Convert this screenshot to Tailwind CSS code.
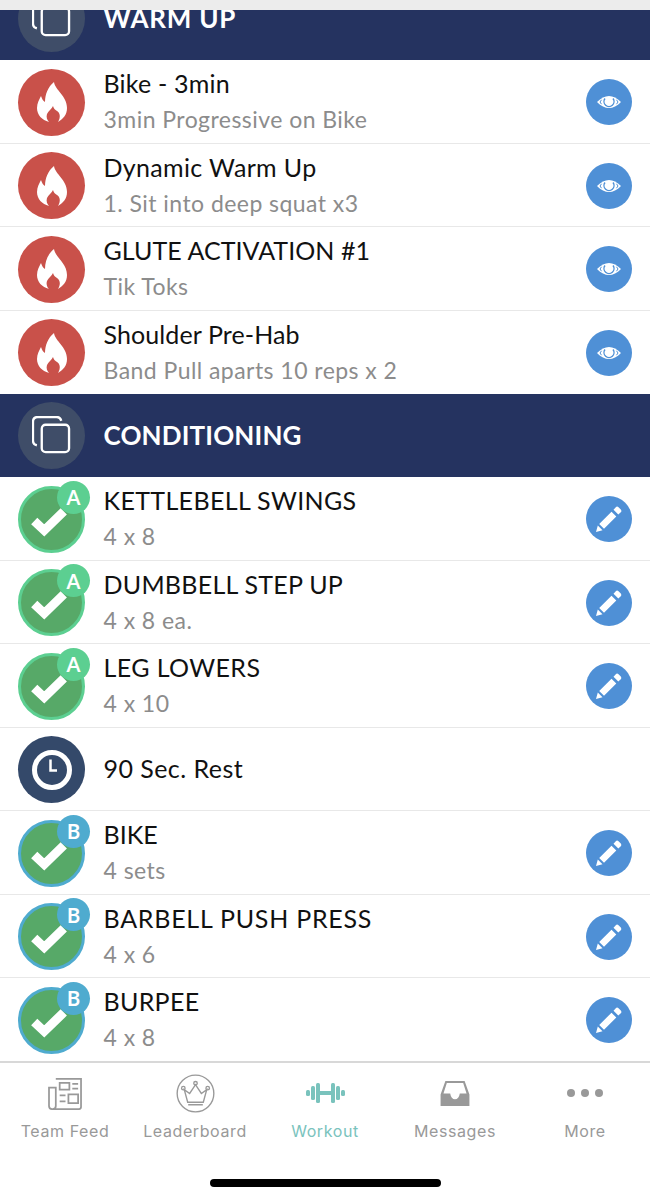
<!DOCTYPE html>
<html lang="en">
<head>
  <meta charset="UTF-8" />
  <title>Workout</title>
  <script src="https://cdn.jsdelivr.net/npm/@tailwindcss/browser@4"></script>
</head>
<body class="bg-white font-['Lato',sans-serif]">
  <!-- shared icons -->
  <svg class="hidden">
    <symbol id="flame" viewBox="0 0 30 40"><path fill="#fff" d="M17 0C18 8 30 14 30 26C30 33 26 37 21 40C24 35 23 31 20 29C18 28 16.500 26 16 24C15 27 11 29 10 32C9 35 10 38 12 40C5 38 0 33 0 26C0 21 2.500 17 4 14C5 17 6 19 8 20C8 12 11 5 17 0Z"/></symbol>
    <symbol id="eye" viewBox="0 0 24 12"><path fill="#fff" d="M0 6C4 2 8 0 12 0S20 2 24 6C20 10 16 12 12 12S4 10 0 6Z"/><path fill="none" stroke="#4f90d6" stroke-width="1.400" d="M8 2.500A5 5 0 1 0 16 2.500"/><path fill="none" stroke="#4f90d6" stroke-width="1" d="M4.500 3.800L3 6L4.500 8.200M19.500 3.800L21 6L19.500 8.200"/></symbol>
    <symbol id="pencil" viewBox="0 0 26 26"><path fill="#fff" d="M0 26L1.800 19.500L6.500 24.200ZM3.200 18L15.500 5.700L20.300 10.500L8 22.800ZM17.500 3.700L19.800 1.200Q21 0 22.500 1.200L24.800 3.500Q26 5 24.800 6.200L22.300 8.500Z"/></symbol>
    <symbol id="check" viewBox="0 0 36 28"><path fill="none" stroke="#fff" stroke-width="8.500" d="M4 12L13.500 21L32 3"/></symbol>
    <symbol id="layers" viewBox="0 0 40 40"><path fill="none" stroke="#fff" stroke-width="2.400" d="M5 30Q1 29 1 25V6Q1 1 6 1H25Q29 1 30 5"/><rect x="10" y="9" width="28" height="28" rx="4" fill="none" stroke="#fff" stroke-width="2.400"/></symbol>
  </svg>

  <div class="w-[650px] h-[1200px] flex flex-col overflow-hidden">
    <div class="h-[10px] bg-[#ececec]"></div>

    <!-- section cut off by the top of the scroll view -->
    <div class="h-[50px] flex flex-col justify-end overflow-hidden bg-[#253360]">
      <div class="h-[83px] shrink-0 flex items-center pl-[18px] gap-[18.5px]">
        <div class="w-[67px] h-[67px] rounded-full bg-[#3f4d68] flex items-center justify-center"><svg class="w-[39px] h-[39px]"><use href="#layers"/></svg></div>
        <div class="text-[26px] font-bold text-white tracking-[0.8px]">WARM UP</div>
      </div>
    </div>

    <div class="h-[83.5px] flex items-center pl-[18px] pr-[18px] gap-[18.5px] border-b border-[#e8e8e8]">
      <div class="mt-[2px] w-[67px] h-[67px] rounded-full bg-[#c9514a] flex items-center justify-center"><svg class="w-[30px] h-[40px]"><use href="#flame"/></svg></div>
      <div class="flex-1">
        <div class="text-[25px] leading-[36px] tracking-[0.2px] text-[#111]">Bike - 3min</div>
        <div class="text-[23px] leading-[36px] tracking-[0.45px] text-[#8c8c8c]">3min Progressive on Bike</div>
      </div>
      <div class="mt-[2px] w-[46px] h-[46px] rounded-full bg-[#4f90d6] flex items-center justify-center"><svg class="w-[24px] h-[12px]"><use href="#eye"/></svg></div>
    </div>
    <div class="h-[83.5px] flex items-center pl-[18px] pr-[18px] gap-[18.5px] border-b border-[#e8e8e8]">
      <div class="mt-[2px] w-[67px] h-[67px] rounded-full bg-[#c9514a] flex items-center justify-center"><svg class="w-[30px] h-[40px]"><use href="#flame"/></svg></div>
      <div class="flex-1">
        <div class="text-[25px] leading-[36px] tracking-[0.35px] text-[#111]">Dynamic Warm Up</div>
        <div class="text-[23px] leading-[36px] tracking-[0.45px] text-[#8c8c8c]">1. Sit into deep squat x3</div>
      </div>
      <div class="mt-[2px] w-[46px] h-[46px] rounded-full bg-[#4f90d6] flex items-center justify-center"><svg class="w-[24px] h-[12px]"><use href="#eye"/></svg></div>
    </div>
    <div class="h-[83.5px] flex items-center pl-[18px] pr-[18px] gap-[18.5px] border-b border-[#e8e8e8]">
      <div class="mt-[2px] w-[67px] h-[67px] rounded-full bg-[#c9514a] flex items-center justify-center"><svg class="w-[30px] h-[40px]"><use href="#flame"/></svg></div>
      <div class="flex-1">
        <div class="text-[25px] leading-[36px] tracking-[0.05px] text-[#111]">GLUTE ACTIVATION #1</div>
        <div class="text-[23px] leading-[36px] tracking-[0.45px] text-[#8c8c8c]">Tik Toks</div>
      </div>
      <div class="mt-[2px] w-[46px] h-[46px] rounded-full bg-[#4f90d6] flex items-center justify-center"><svg class="w-[24px] h-[12px]"><use href="#eye"/></svg></div>
    </div>
    <div class="h-[83.5px] flex items-center pl-[18px] pr-[18px] gap-[18.5px] border-b border-transparent">
      <div class="mt-[2px] w-[67px] h-[67px] rounded-full bg-[#c9514a] flex items-center justify-center"><svg class="w-[30px] h-[40px]"><use href="#flame"/></svg></div>
      <div class="flex-1">
        <div class="text-[25px] leading-[36px] tracking-[0.1px] text-[#111]">Shoulder Pre-Hab</div>
        <div class="text-[23px] leading-[36px] tracking-[0.45px] text-[#8c8c8c]">Band Pull aparts 10 reps x 2</div>
      </div>
      <div class="mt-[2px] w-[46px] h-[46px] rounded-full bg-[#4f90d6] flex items-center justify-center"><svg class="w-[24px] h-[12px]"><use href="#eye"/></svg></div>
    </div>

    <div class="h-[83px] shrink-0 bg-[#253360] flex items-center pl-[18px] gap-[18.5px]">
      <div class="w-[67px] h-[67px] rounded-full bg-[#3f4d68] flex items-center justify-center"><svg class="w-[39px] h-[39px]"><use href="#layers"/></svg></div>
      <div class="text-[26px] font-bold text-white tracking-[0.15px]">CONDITIONING</div>
    </div>

    <div class="h-[83.5px] flex items-center pl-[18px] pr-[18px] gap-[18.5px] border-b border-[#e8e8e8]">
      <div class="mt-[2px] relative w-[67px] h-[67px] rounded-full bg-[#57a968] border-[3px] border-[#5ccf91] flex items-center justify-center"><svg class="w-[38px] h-[30px] mt-[7px] mr-[5px]"><use href="#check"/></svg><div class="absolute left-[36px] top-[-8px] w-[33px] h-[33px] rounded-full bg-[#5ccf91] flex items-center justify-center text-white font-bold text-[20px]">A</div></div>
      <div class="flex-1">
        <div class="text-[25px] leading-[36px] tracking-[0.35px] text-[#111]">KETTLEBELL SWINGS</div>
        <div class="text-[23px] leading-[36px] tracking-[0.45px] text-[#8c8c8c]">4 x 8</div>
      </div>
      <div class="mt-[2px] w-[46px] h-[46px] rounded-full bg-[#4f90d6] flex items-center justify-center"><svg class="w-[26px] h-[26px]"><use href="#pencil"/></svg></div>
    </div>
    <div class="h-[83.5px] flex items-center pl-[18px] pr-[18px] gap-[18.5px] border-b border-[#e8e8e8]">
      <div class="mt-[2px] relative w-[67px] h-[67px] rounded-full bg-[#57a968] border-[3px] border-[#5ccf91] flex items-center justify-center"><svg class="w-[38px] h-[30px] mt-[7px] mr-[5px]"><use href="#check"/></svg><div class="absolute left-[36px] top-[-8px] w-[33px] h-[33px] rounded-full bg-[#5ccf91] flex items-center justify-center text-white font-bold text-[20px]">A</div></div>
      <div class="flex-1">
        <div class="text-[25px] leading-[36px] tracking-[0.25px] text-[#111]">DUMBBELL STEP UP</div>
        <div class="text-[23px] leading-[36px] tracking-[0.45px] text-[#8c8c8c]">4 x 8 ea.</div>
      </div>
      <div class="mt-[2px] w-[46px] h-[46px] rounded-full bg-[#4f90d6] flex items-center justify-center"><svg class="w-[26px] h-[26px]"><use href="#pencil"/></svg></div>
    </div>
    <div class="h-[83.5px] flex items-center pl-[18px] pr-[18px] gap-[18.5px] border-b border-[#e8e8e8]">
      <div class="mt-[2px] relative w-[67px] h-[67px] rounded-full bg-[#57a968] border-[3px] border-[#5ccf91] flex items-center justify-center"><svg class="w-[38px] h-[30px] mt-[7px] mr-[5px]"><use href="#check"/></svg><div class="absolute left-[36px] top-[-8px] w-[33px] h-[33px] rounded-full bg-[#5ccf91] flex items-center justify-center text-white font-bold text-[20px]">A</div></div>
      <div class="flex-1">
        <div class="text-[25px] leading-[36px] tracking-[0.4px] text-[#111]">LEG LOWERS</div>
        <div class="text-[23px] leading-[36px] tracking-[0.45px] text-[#8c8c8c]">4 x 10</div>
      </div>
      <div class="mt-[2px] w-[46px] h-[46px] rounded-full bg-[#4f90d6] flex items-center justify-center"><svg class="w-[26px] h-[26px]"><use href="#pencil"/></svg></div>
    </div>

    <!-- rest row -->
    <div class="h-[83.5px] flex items-center pl-[18px] pr-[18px] gap-[18.5px] border-b border-[#e8e8e8]">
      <div class="mt-[2px] w-[67px] h-[67px] rounded-full bg-[#34496a] flex items-center justify-center">
        <svg class="w-[40px] h-[40px]" viewBox="0 0 40 40"><circle cx="20" cy="20" r="17.500" fill="none" stroke="#fff" stroke-width="5"/><path fill="none" stroke="#fff" stroke-width="2.500" d="M18.500 9.500V20.500H25"/></svg>
      </div>
      <div class="flex-1 text-[25px] tracking-[0.45px] text-[#111]">90 Sec. Rest</div>
    </div>

    <div class="h-[83.5px] flex items-center pl-[18px] pr-[18px] gap-[18.5px] border-b border-[#e8e8e8]">
      <div class="mt-[2px] relative w-[67px] h-[67px] rounded-full bg-[#57a968] border-[3px] border-[#4fabcf] flex items-center justify-center"><svg class="w-[38px] h-[30px] mt-[7px] mr-[5px]"><use href="#check"/></svg><div class="absolute left-[36px] top-[-8px] w-[33px] h-[33px] rounded-full bg-[#4fabcf] flex items-center justify-center text-white font-bold text-[20px]">B</div></div>
      <div class="flex-1">
        <div class="text-[25px] leading-[36px] text-[#111]">BIKE</div>
        <div class="text-[23px] leading-[36px] tracking-[0.45px] text-[#8c8c8c]">4 sets</div>
      </div>
      <div class="mt-[2px] w-[46px] h-[46px] rounded-full bg-[#4f90d6] flex items-center justify-center"><svg class="w-[26px] h-[26px]"><use href="#pencil"/></svg></div>
    </div>
    <div class="h-[83.5px] flex items-center pl-[18px] pr-[18px] gap-[18.5px] border-b border-[#e8e8e8]">
      <div class="mt-[2px] relative w-[67px] h-[67px] rounded-full bg-[#57a968] border-[3px] border-[#4fabcf] flex items-center justify-center"><svg class="w-[38px] h-[30px] mt-[7px] mr-[5px]"><use href="#check"/></svg><div class="absolute left-[36px] top-[-8px] w-[33px] h-[33px] rounded-full bg-[#4fabcf] flex items-center justify-center text-white font-bold text-[20px]">B</div></div>
      <div class="flex-1">
        <div class="text-[25px] leading-[36px] tracking-[0.75px] text-[#111]">BARBELL PUSH PRESS</div>
        <div class="text-[23px] leading-[36px] tracking-[0.45px] text-[#8c8c8c]">4 x 6</div>
      </div>
      <div class="mt-[2px] w-[46px] h-[46px] rounded-full bg-[#4f90d6] flex items-center justify-center"><svg class="w-[26px] h-[26px]"><use href="#pencil"/></svg></div>
    </div>
    <div class="h-[83px] flex items-center pl-[18px] pr-[18px] gap-[18.5px] border-b border-transparent">
      <div class="mt-[2px] relative w-[67px] h-[67px] rounded-full bg-[#57a968] border-[3px] border-[#4fabcf] flex items-center justify-center"><svg class="w-[38px] h-[30px] mt-[7px] mr-[5px]"><use href="#check"/></svg><div class="absolute left-[36px] top-[-8px] w-[33px] h-[33px] rounded-full bg-[#4fabcf] flex items-center justify-center text-white font-bold text-[20px]">B</div></div>
      <div class="flex-1">
        <div class="text-[25px] leading-[36px] tracking-[0.3px] text-[#111]">BURPEE</div>
        <div class="text-[23px] leading-[36px] tracking-[0.45px] text-[#8c8c8c]">4 x 8</div>
      </div>
      <div class="mt-[2px] w-[46px] h-[46px] rounded-full bg-[#4f90d6] flex items-center justify-center"><svg class="w-[26px] h-[26px]"><use href="#pencil"/></svg></div>
    </div>

    <!-- tab bar -->
    <div class="flex-1 border-t-2 border-[#d8d8d8] flex flex-col">
      <div class="flex pt-[8px] font-['Inter',sans-serif] text-[16px] tracking-[0.6px] text-[#999]">
        <div class="w-[130px] flex flex-col items-center">
          <div class="h-[44px] flex items-center">
            <svg class="w-[35px] h-[33px]" viewBox="0 0 36 34" fill="none" stroke="#999" stroke-width="1.800"><path d="M8 2H34V31Q34 33 32 33H4Q1 33 1 30V11H8V30Q8 33 5 33"/><path d="M12 6H22V13H12ZM25 7H31M25 12H31M12 19H18M12 25H18M21 18H31V27H21Z"/></svg>
          </div>
          <div class="mt-[4px] leading-[24px]">Team Feed</div>
        </div>
        <div class="w-[130px] flex flex-col items-center">
          <div class="h-[44px] flex items-center">
            <svg class="w-[39px] h-[39px]" viewBox="0 0 40 40" fill="none" stroke="#999" stroke-width="1.400"><circle cx="20" cy="20" r="18.800"/><path d="M12 29L8.500 16L14 20L20 11L26 20L31.500 16L28 29ZM12.500 31.500H27.500"/><circle cx="7.500" cy="14.500" r="1.800"/><circle cx="20" cy="9.500" r="1.800"/><circle cx="32.500" cy="14.500" r="1.800"/></svg>
          </div>
          <div class="mt-[4px] leading-[24px]">Leaderboard</div>
        </div>
        <div class="w-[130px] flex flex-col items-center text-[#7ac3bd]">
          <div class="h-[44px] flex items-center">
            <svg class="w-[39px] h-[20px]" viewBox="0 0 39 20" fill="#7ac3bd"><rect x="0" y="7" width="4" height="6" rx="1.500"/><rect x="5" y="3" width="4" height="14" rx="1.500"/><rect x="10" y="0" width="4" height="20" rx="1.500"/><rect x="14" y="8" width="11" height="4"/><rect x="25" y="0" width="4" height="20" rx="1.500"/><rect x="30" y="3" width="4" height="14" rx="1.500"/><rect x="35" y="7" width="4" height="6" rx="1.500"/></svg>
          </div>
          <div class="mt-[4px] leading-[24px]">Workout</div>
        </div>
        <div class="w-[130px] flex flex-col items-center">
          <div class="h-[44px] flex items-center">
            <svg class="w-[30px] h-[25px]" viewBox="0 0 30 26" fill="#999"><path fill-rule="evenodd" d="M5 0H25L30 14V26H0V14ZM6.500 2L3 13H10Q11 19 15 19T20 13H27L23.500 2Z"/></svg>
          </div>
          <div class="mt-[4px] leading-[24px]">Messages</div>
        </div>
        <div class="w-[130px] flex flex-col items-center">
          <div class="h-[44px] flex items-center">
            <svg class="w-[36px] h-[8px]" viewBox="0 0 36 8" fill="#999"><circle cx="4" cy="4" r="4"/><circle cx="18" cy="4" r="4"/><circle cx="32" cy="4" r="4"/></svg>
          </div>
          <div class="mt-[4px] leading-[24px]">More</div>
        </div>
      </div>
      <div class="mt-[36px] mx-auto w-[231px] h-[8px] rounded-full bg-black"></div>
    </div>
  </div>
</body>
</html>
